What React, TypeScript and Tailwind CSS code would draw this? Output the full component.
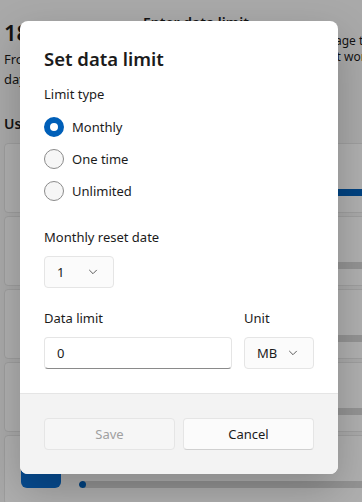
import React from "react";

const font = { fontFamily: '"Segoe UI", "Noto Sans", "Open Sans", sans-serif' };

function Chevron() {
  return (
    <svg width="10" height="6" viewBox="0 0 10 6" fill="none">
      <path d="M1.5 1.2L5 4.7L8.5 1.2" stroke="#5c5c5c" strokeWidth="1" strokeLinecap="round" strokeLinejoin="round" />
    </svg>
  );
}

function Radio({ label, checked }: { label: string; checked?: boolean }) {
  return (
    <div className="flex h-8 items-center gap-2">
      {checked ? (
        <span className="box-border h-5 w-5 rounded-full border-[6px] border-[#005fb8] bg-white" />
      ) : (
        <span className="box-border h-5 w-5 rounded-full border border-[#8b8b8b] bg-[#f6f6f6]" />
      )}
      <span className="text-[13px] leading-5 text-[#1b1b1b]">{label}</span>
    </div>
  );
}

function Select({ value, width }: { value: string; width: string }) {
  return (
    <div
      className={`${width} flex h-8 items-center justify-between rounded border border-[#e5e5e5] bg-[#fbfbfb] pl-3 pr-[15px]`}
    >
      <span className="text-[13px] leading-5 text-[#1b1b1b]">{value}</span>
      <Chevron />
    </div>
  );
}

function UsageRow({ fill, blueIcon }: { fill: number; blueIcon?: boolean }) {
  return (
    <div className="flex h-[70px] shrink-0 gap-[18px] rounded border border-[#e2e2e2] bg-[#fbfbfb] pl-4">
      <div className={`mt-3 h-10 w-10 rounded-md ${blueIcon ? "bg-[#0a6ed1]" : "bg-[#d9d9d9]"}`} />
      <div className="flex flex-1 flex-col pt-3">
        <div className="text-[13px] leading-5 text-[#1b1b1b]">App</div>
        <div className="mt-[13px] h-[7px] w-full overflow-hidden rounded-full bg-[#d3d3d3]">
          <div className="h-full rounded-full bg-[#005fb8]" style={{ width: `${fill}%` }} />
        </div>
      </div>
    </div>
  );
}

export default function App() {
  return (
    <div className="relative h-[502px] w-[362px] overflow-hidden bg-[#f3f3f3]" style={font}>
      {/* background page */}
      <div className="flex w-[440px] flex-col px-1">
        <div className="flex items-start gap-3">
          <div className="w-[127px] shrink-0 pt-[18px]">
            <div className="whitespace-nowrap text-[22px] font-semibold leading-7 text-[#1b1b1b]">187.07 MB</div>
            <div className="mt-[3px] text-[13px] leading-5 text-[#1b1b1b]">From the last 30 days</div>
          </div>
          <div className="flex-1 pt-[13px]">
            <div className="text-[14px] font-semibold leading-5 text-[#1b1b1b]">Enter data limit</div>
            <div className="whitespace-nowrap text-[12px] leading-4 text-[#1b1b1b]">
              Set a data limit to help manage usage to stay within your plan.
            </div>
            <div className="whitespace-nowrap text-[12px] leading-4 text-[#1b1b1b]">
              We'll warn you if you're close, but it won't stop you.
            </div>
          </div>
        </div>
        <div className="mt-[25px] text-[14px] font-semibold leading-5 text-[#1b1b1b]">Usage statistics</div>
        <div className="mt-[9px] flex flex-col gap-[3px]">
          <UsageRow fill={100} />
          <UsageRow fill={40} />
          <UsageRow fill={20} />
          <UsageRow fill={8} />
          <UsageRow fill={2} blueIcon />
        </div>
      </div>

      {/* smoke overlay */}
      <div className="absolute inset-0 bg-black/30" />

      {/* dialog */}
      <div className="absolute left-[20px] top-[21px] w-[318px] overflow-hidden rounded-lg bg-white shadow-[0_16px_40px_rgba(0,0,0,0.22)]">
        <div className="px-6 pb-6 pt-6">
          <div className="text-[18.5px] font-semibold leading-7 text-[#1b1b1b]">Set data limit</div>
          <div className="mt-[11px] text-[13px] leading-5 text-[#1b1b1b]">Limit type</div>
          <div className="mt-[7px] flex flex-col">
            <Radio label="Monthly" checked />
            <Radio label="One time" />
            <Radio label="Unlimited" />
          </div>
          <div className="mt-5 text-[13px] leading-5 text-[#1b1b1b]">Monthly reset date</div>
          <div className="mt-[9px]">
            <Select value="1" width="w-[70px]" />
          </div>
          <div className="mt-5 flex gap-3">
            <div className="flex flex-1 flex-col">
              <div className="text-[13px] leading-5 text-[#1b1b1b]">Data limit</div>
              <div className="mt-[9px] flex h-8 items-center rounded border border-[#e5e5e5] border-b-[#8a8a8a] bg-white pl-3">
                <span className="text-[13px] leading-5 text-[#1b1b1b]">0</span>
              </div>
            </div>
            <div className="flex flex-col">
              <div className="text-[13px] leading-5 text-[#1b1b1b]">Unit</div>
              <div className="mt-[9px]">
                <Select value="MB" width="w-[70px]" />
              </div>
            </div>
          </div>
        </div>
        <div className="grid grid-cols-2 gap-2 border-t border-[#e5e5e5] bg-[#f3f3f3] px-6 py-6">
          <div className="flex h-8 items-center justify-center rounded border border-[#e5e5e5] bg-[#f6f6f6] text-[13px] leading-5 text-[#a0a0a0]">
            Save
          </div>
          <div className="flex h-8 items-center justify-center rounded border border-[#e5e5e5] border-b-[#d0d0d0] bg-[#fbfbfb] text-[13px] leading-5 text-[#1b1b1b]">
            Cancel
          </div>
        </div>
      </div>
    </div>
  );
}
